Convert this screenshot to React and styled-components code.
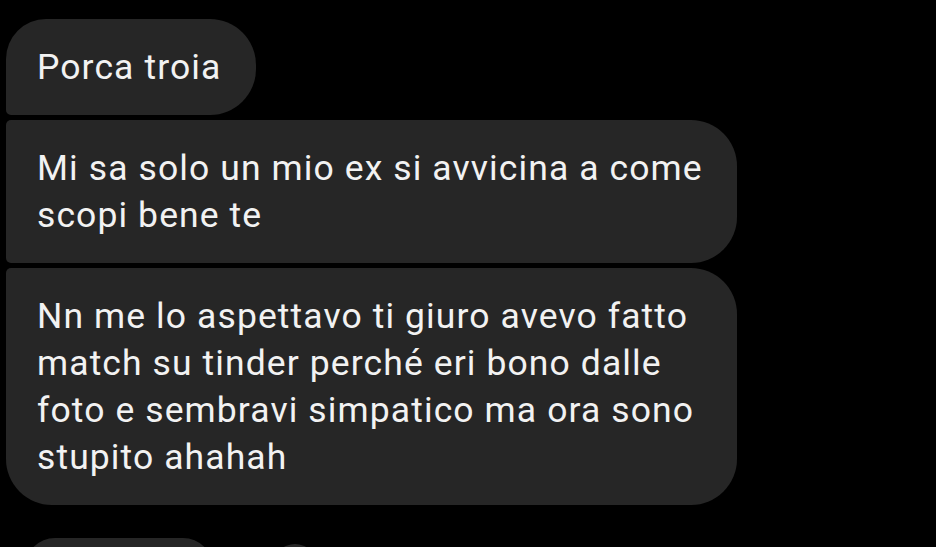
import React from "react";
import styled, { createGlobalStyle } from "styled-components";

const Global = createGlobalStyle`
  html, body {
    margin: 0;
    padding: 0;
    background: #000;
    height: 547px;
    overflow: hidden;
  }
  body {
    font-family: Roboto, "Noto Sans", "Liberation Sans", sans-serif;
  }
`;

const Thread = styled.div`
  display: flex;
  flex-direction: column;
  align-items: flex-start;
  gap: 5px;
  padding: 19px 0 0 6px;
  width: 936px;
  box-sizing: border-box;
`;

const BIG = 46;
const SMALL = 5;

const Bubble = styled.div`
  background: #262626;
  color: #f2f2f2;
  font-size: 35.5px;
  line-height: 47px;
  letter-spacing: 1.1px;
  white-space: nowrap;
  padding: 25px 35px 24px 31px;
  width: ${(p) => (p.$wide ? "731px" : "auto")};
  box-sizing: border-box;
  border-radius: ${(p) =>
    p.$pos === "first"
      ? `40px ${BIG}px ${BIG}px ${SMALL}px`
      : p.$pos === "middle"
      ? `${SMALL}px ${BIG}px ${BIG}px ${SMALL}px`
      : `${SMALL}px ${BIG}px ${BIG}px ${BIG}px`};
`;

const NextRow = styled.div`
  display: flex;
  align-items: flex-start;
  gap: 60px;
  margin-top: 28px;
  padding-left: 19px;
`;

const Pill = styled.div`
  width: 188px;
  height: 44px;
  border-radius: 30px 30px 0 0;
  background: #262626;
`;

const Dot = styled.div`
  width: 44px;
  height: 44px;
  margin-top: 6px;
  border-radius: 50%;
  background: #262626;
`;

const messages = [
  { pos: "first", wide: false, lines: ["Porca troia"] },
  {
    pos: "middle",
    wide: true,
    lines: ["Mi sa solo un mio ex si avvicina a come", "scopi bene te"],
  },
  {
    pos: "last",
    wide: true,
    lines: [
      "Nn me lo aspettavo ti giuro avevo fatto",
      "match su tinder perché eri bono dalle",
      "foto e sembravi simpatico ma ora sono",
      "stupito ahahah",
    ],
  },
];

export default function App() {
  return (
    <>
      <Global />
      <Thread>
        {messages.map((m, i) => (
          <Bubble key={i} $pos={m.pos} $wide={m.wide}>
            {m.lines.map((l, j) => (
              <React.Fragment key={j}>
                {j > 0 && <br />}
                {l}
              </React.Fragment>
            ))}
          </Bubble>
        ))}
        <NextRow>
          <Pill />
          <Dot />
        </NextRow>
      </Thread>
    </>
  );
}
